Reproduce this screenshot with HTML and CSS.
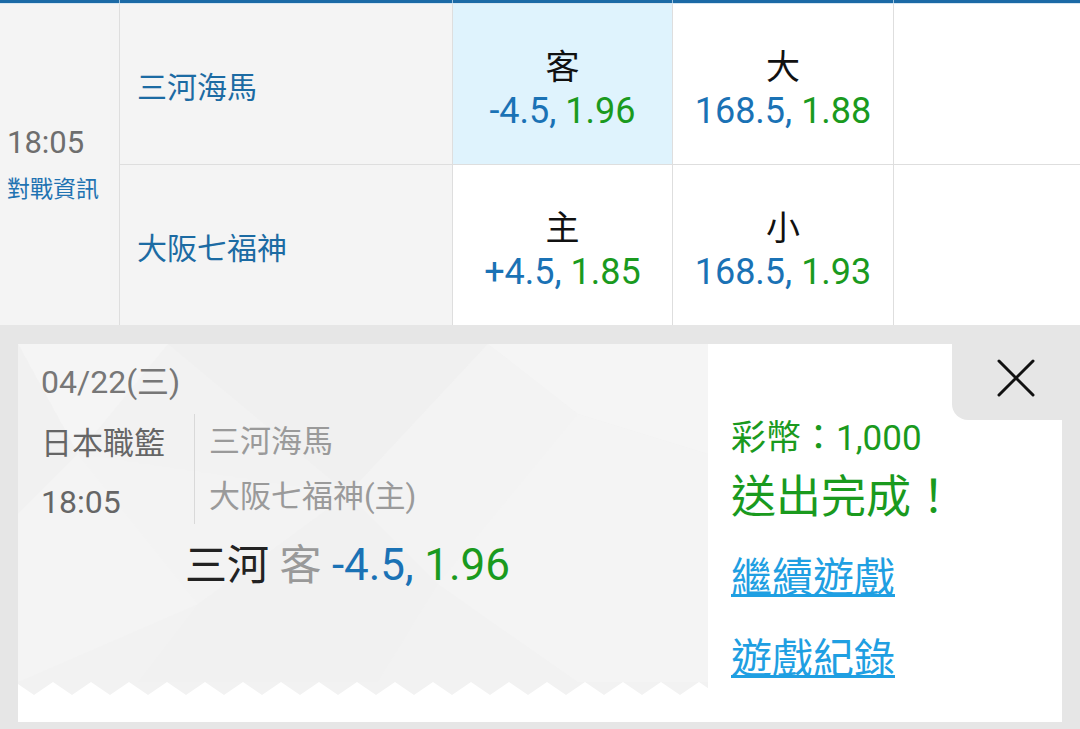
FILE: index.html
```html
<!DOCTYPE html>
<html lang="zh-Hant">
<head>
<meta charset="utf-8">
<title>投注完成</title>
<link rel="stylesheet" href="styles.css">
</head>
<body>
<div class="board">
  <div class="topbar"><span></span><span></span><span></span><span></span><span></span></div>
  <div class="grid">
    <div class="cell time-cell">
      <div class="time">18:05</div>
      <div class="info">對戰資訊</div>
    </div>
    <div class="cell team">三河海馬</div>
    <div class="cell odds active">
      <div class="lbl">客</div>
      <div class="val"><span class="b">-4.5,</span> <span class="g">1.96</span></div>
    </div>
    <div class="cell odds">
      <div class="lbl">大</div>
      <div class="val"><span class="b">168.5,</span> <span class="g">1.88</span></div>
    </div>
    <div class="cell"></div>
    <div class="cell team">大阪七福神</div>
    <div class="cell odds">
      <div class="lbl">主</div>
      <div class="val"><span class="b">+4.5,</span> <span class="g">1.85</span></div>
    </div>
    <div class="cell odds">
      <div class="lbl">小</div>
      <div class="val"><span class="b">168.5,</span> <span class="g">1.93</span></div>
    </div>
    <div class="cell"></div>
  </div>
</div>

<div class="panel-area">
  <div class="card">
    <div class="ticket-side">
      <div class="ticket">
        <div class="date">04/22(三)</div>
        <div class="match">
          <div class="meta">
            <div>日本職籃</div>
            <div class="meta-time">18:05</div>
          </div>
          <div class="teams">
            <div>三河海馬</div>
            <div>大阪七福神(主)</div>
          </div>
        </div>
        <div class="pick"><span class="pk-team">三河</span> <span class="pk-side">客</span> <span class="b pk-num">-4.5,</span> <span class="g pk-num">1.96</span></div>
      </div>
      <div class="zigzag"></div>
      <div class="ticket-foot"></div>
    </div>
    <div class="result">
      <div class="coins">彩幣：1,000</div>
      <div class="done">送出完成！</div>
      <a class="link first" href="#">繼續遊戲</a>
      <a class="link" href="#">遊戲紀錄</a>
    </div>
    <button class="close" type="button" aria-label="關閉">
      <svg width="38" height="38" viewBox="0 0 38 38"><path d="M2 2L36 36M36 2L2 36" stroke="#111" stroke-width="3" stroke-linecap="round" fill="none"/></svg>
    </button>
  </div>
</div>
</body>
</html>
```
FILE: styles.css
```css
html, body {
  margin: 0;
  padding: 0;
}
body {
  width: 1080px;
  height: 729px;
  overflow: hidden;
  background: #e6e6e6;
  font-family: Roboto, "Noto Sans CJK TC", sans-serif;
}

.board {
  background: #fff;
}
.topbar {
  display: grid;
  grid-template-columns: 119px 332px 219px 220px 1fr;
  column-gap: 1px;
  height: 3px;
  background: #9cc2de;
  border-bottom: 1px solid #d6e6f2;
}
.topbar span {
  background: #1b6aa6;
}
.grid {
  display: grid;
  grid-template-columns: 119px 332px 219px 220px 1fr;
  grid-template-rows: 160px 160px;
  gap: 1px;
  background: #dedede;
}
.cell {
  background: #fff;
}
.time-cell {
  grid-row: span 2;
  background: #f4f4f4;
  display: flex;
  flex-direction: column;
  justify-content: center;
  padding-left: 7px;
}
.time {
  font-size: 31px;
  line-height: 40px;
  color: #6e6e6e;
}
.info {
  margin-top: 10px;
  font-size: 23px;
  line-height: 34px;
  color: #1f73b2;
}
.team {
  background: #f4f4f4;
  display: flex;
  align-items: center;
  padding: 2px 0 0 17px;
  font-size: 30px;
  color: #1c6ba3;
}
.odds {
  display: flex;
  flex-direction: column;
  align-items: center;
  justify-content: center;
  padding-top: 9px;
}
.odds.active {
  background: #dff3fd;
}
.lbl {
  font-size: 34px;
  line-height: 44px;
  color: #111;
}
.val {
  font-size: 36px;
  line-height: 44px;
  white-space: nowrap;
}
.b {
  color: #1a72b5;
}
.g {
  color: #1a9a1e;
}

.panel-area {
  height: 404px;
  box-sizing: border-box;
  padding: 19px 18px 0;
}
.card {
  position: relative;
  display: grid;
  grid-template-columns: 690px 1fr;
  height: 378px;
  background: #fff;
}
.ticket-side {
  display: flex;
  flex-direction: column;
}
.ticket {
  flex: 1;
  padding: 18px 0 0 23px;
  background-color: #f2f2f2;
  background-image: url("data:image/svg+xml,%3Csvg xmlns='http://www.w3.org/2000/svg' viewBox='0 0 690 338' preserveAspectRatio='none'%3E%3Cpath d='M0 0H150L60 110Z' fill='%23f5f5f5'/%3E%3Cpath d='M0 0L60 110L0 170Z' fill='%23f1f1f1'/%3E%3Cpath d='M150 0H470L330 150Z' fill='%23f0f0f0'/%3E%3Cpath d='M470 0H690V110L560 70Z' fill='%23f5f5f5'/%3E%3Cpath d='M470 0L560 70L420 240L330 150Z' fill='%23f3f3f3'/%3E%3Cpath d='M60 110L330 150L180 260Z' fill='%23f3f3f3'/%3E%3Cpath d='M0 170L60 110L180 260L0 338Z' fill='%23f4f4f4'/%3E%3Cpath d='M180 260L330 150L420 240L360 338H120Z' fill='%23f1f1f1'/%3E%3Cpath d='M560 70L690 110V338H560L420 240Z' fill='%23f4f4f4'/%3E%3C/svg%3E");
  background-size: 100% 100%;
}
.date {
  font-size: 32px;
  line-height: 40px;
  color: #777;
}
.match {
  display: flex;
  align-items: flex-start;
  margin-top: 12px;
}
.meta {
  width: 153px;
  font-size: 31px;
  line-height: 59px;
  color: #666;
}
.meta-time {
  font-size: 32px;
}
.teams {
  border-left: 1px solid #d9d9d9;
  padding-left: 14px;
  font-size: 31px;
  line-height: 55px;
  color: #9a9a9a;
}
.pick {
  margin: 8px 0 0 144px;
  font-size: 42px;
  line-height: 50px;
  white-space: nowrap;
}
.pk-num {
  font-size: 44px;
}
.pk-team {
  color: #222;
}
.pk-side {
  color: #999;
}
.zigzag {
  height: 13px;
  background-image: url("data:image/svg+xml,%3Csvg xmlns='http://www.w3.org/2000/svg' width='38' height='13'%3E%3Cpath d='M0 0H38L19 13Z' fill='%23f2f2f2'/%3E%3C/svg%3E");
  background-size: 38px 13px;
  background-position: -3px 0;
  background-repeat: repeat-x;
}
.ticket-foot {
  height: 27px;
}

.result {
  padding: 70px 0 0 23px;
}
.coins {
  font-size: 35px;
  line-height: 50px;
  color: #1a9a1e;
}
.done {
  margin-top: 4px;
  font-size: 45px;
  line-height: 60px;
  color: #1a9a1e;
}
.link {
  display: block;
  width: max-content;
  margin-top: 21px;
  font-size: 41px;
  line-height: 60px;
  color: #1f9fe2;
  text-decoration: underline;
  text-decoration-thickness: 3px;
}
.link.first {
  margin-top: 20px;
}
.close {
  position: absolute;
  top: 0;
  right: 0;
  width: 110px;
  height: 76px;
  box-sizing: border-box;
  margin: 0;
  border: 0;
  padding: 15px 0 0 45px;
  background: #e6e6e6;
  border-bottom-left-radius: 16px;
  display: flex;
  align-items: flex-start;
  justify-content: flex-start;
}
.close svg {
  display: block;
}
```
